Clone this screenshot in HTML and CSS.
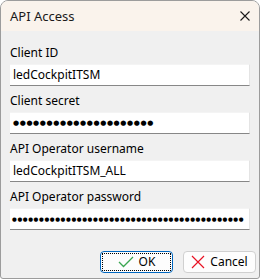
FILE: index.html
```html
<!DOCTYPE html>
<html lang="en">
<head>
    <meta charset="UTF-8">
    <title>API Access</title>
    <link rel="stylesheet" href="styles.css">
</head>
<body>
    <div class="dialog">
        <div class="titlebar">
            <span class="title">API Access</span>
            <svg class="close" width="10" height="10" viewBox="0 0 10 10">
                <path d="M0.5 0.5 L9.5 9.5 M9.5 0.5 L0.5 9.5" stroke="#1a1a1a" stroke-width="1.1" fill="none"/>
            </svg>
        </div>

        <div class="content">
            <div class="field">
                <label>Client ID</label>
                <div class="input">ledCockpitITSM</div>
            </div>
            <div class="field">
                <label>Client secret</label>
                <div class="input secret">●●●●●●●●●●●●●●●●●●●●●</div>
            </div>
            <div class="field">
                <label>API Operator username</label>
                <div class="input">ledCockpitITSM_ALL</div>
            </div>
            <div class="field">
                <label>API Operator password</label>
                <div class="input secret small">●●●●●●●●●●●●●●●●●●●●●●●●●●●●●●●●●●●●●●●●●●●</div>
            </div>
        </div>

        <div class="buttons">
            <button class="btn btn-default">
                <span class="focus">
                    <svg width="16" height="12" viewBox="0 0 16 12">
                        <path d="M1 6 L5.5 10.5 L15 1" stroke="#3aa650" stroke-width="1.3" fill="none"/>
                    </svg>
                    OK
                </span>
            </button>
            <button class="btn">
                <span class="focus plain">
                    <svg width="14" height="14" viewBox="0 0 14 14">
                        <path d="M1 1 L13 13 M13 1 L1 13" stroke="#e81123" stroke-width="1.2" fill="none"/>
                    </svg>
                    Cancel
                </span>
            </button>
        </div>
    </div>
</body>
</html>
```

FILE: styles.css
```css
* {
    margin: 0;
    padding: 0;
    box-sizing: border-box;
}

body {
    font-family: 'Noto Sans', 'Open Sans', sans-serif;
    font-size: 12px;
    color: #000;
    background: #fff;
}

.dialog {
    width: 260px;
    height: 279px;
    border: 1px solid #9c9c9c;
    border-radius: 8px 8px 3px 3px;
    background: #f0f0f0;
    overflow: hidden;
    display: flex;
    flex-direction: column;
}

.titlebar {
    height: 30px;
    background: #faf3ec;
    display: flex;
    align-items: center;
    justify-content: space-between;
    padding: 0 9px 0 9px;
}

.title {
    color: #1a1a1a;
    font-size: 13px;
}

.content {
    padding: 14px 9px 0 9px;
    display: flex;
    flex-direction: column;
    gap: 7px;
}

.field label {
    display: block;
    line-height: 16px;
    margin-bottom: 3px;
}

.input {
    height: 22px;
    background: #fff;
    border-top: 1px solid #f4f4f4;
    border-right: 1px solid #e4e4e4;
    border-bottom: 1px solid #878787;
    padding-left: 3px;
    line-height: 20px;
    white-space: nowrap;
    overflow: hidden;
}

.secret {
    font-family: 'DejaVu Sans', sans-serif;
    font-size: 7px;
    letter-spacing: 0.6px;
}

.secret.small {
    font-size: 5.5px;
    letter-spacing: 0.6px;
    padding-left: 2px;
}

.buttons {
    margin-top: auto;
    display: flex;
    justify-content: flex-end;
    gap: 10px;
    padding: 0 3px 5px 0;
}

.btn {
    width: 73px;
    height: 22px;
    border: 1px solid #d0d0d0;
    border-radius: 4px;
    background: #fdfdfd;
    font-family: 'Noto Sans', 'Open Sans', sans-serif;
    font-size: 12px;
    color: #000;
    padding: 1px;
    display: flex;
}

.btn-default {
    border-color: #0067c0;
}

.focus {
    flex: 1;
    display: flex;
    align-items: center;
    justify-content: center;
    gap: 5px;
    border: 1px dotted #000;
    line-height: 16px;
}

.focus.plain {
    border-color: transparent;
}
```
